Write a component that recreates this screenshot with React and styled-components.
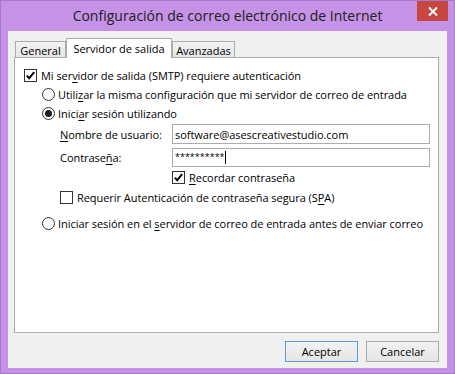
import React from "react";
import styled, { createGlobalStyle } from "styled-components";

const Global = createGlobalStyle`
  html, body { margin: 0; padding: 0; }
  body {
    background: #c592e7;
    font-family: "Open Sans", "Noto Sans", sans-serif;
    color: #000;
  }
`;

const Window = styled.div`
  width: 455px;
  height: 374px;
  box-sizing: border-box;
  border: 1px solid #a878cc;
  background: #c592e7;
  display: flex;
  flex-direction: column;
`;

const TitleBar = styled.div`
  height: 30px;
  display: grid;
  grid-template-columns: 31px 1fr 31px;
  padding: 0 6px;
  align-items: start;
`;

const Title = styled.div`
  grid-column: 2;
  text-align: center;
  font-size: 14px;
  line-height: 30px;
  color: #202020;
  white-space: nowrap;
`;

const CloseBtn = styled.div`
  grid-column: 3;
  height: 20px;
  background: #c7463f;
  display: flex;
  align-items: center;
  justify-content: center;
`;

const Client = styled.div`
  flex: 1;
  margin: 0 7px 5px 7px;
  background: #f0f0f0;
  display: flex;
  flex-direction: column;
  padding: 7px 8px 6px 6px;
`;

const TabStrip = styled.div`
  display: flex;
  align-items: flex-end;
  height: 19px;
  padding-left: 1px;
  position: relative;
  z-index: 1;
`;

const Tab = styled.div`
  box-sizing: border-box;
  width: ${(p) => p.$w}px;
  height: ${(p) => (p.$active ? 20 : 16)}px;
  margin-bottom: ${(p) => (p.$active ? -1 : 0)}px;
  border: 1px solid #acacac;
  border-bottom: none;
  background: ${(p) =>
    p.$active ? "#ffffff" : "linear-gradient(#f2f2f2, #e6e6e6)"};
  font-size: 11px;
  display: flex;
  align-items: center;
  justify-content: center;
  padding-top: ${(p) => (p.$active ? 0 : 1)}px;
  white-space: nowrap;
`;

const Panel = styled.div`
  flex: 1;
  border: 1px solid #acacac;
  background: #fff;
  padding: 8px 0 0 9px;
  display: flex;
  flex-direction: column;
  font-size: 11px;
  letter-spacing: -0.05px;
`;

const Row = styled.div`
  height: ${(p) => p.$h || 19}px;
  margin-left: ${(p) => p.$indent || 0}px;
  margin-top: ${(p) => p.$mt || 0}px;
  display: flex;
  align-items: center;
  gap: ${(p) => (p.$gap != null ? p.$gap : 4)}px;
  white-space: nowrap;
`;

const U = styled.span`
  text-decoration: underline;
  text-underline-offset: 2px;
`;

const Box = styled.span`
  box-sizing: border-box;
  width: 13px;
  height: 13px;
  border: 1px solid #333;
  background: #fff;
  display: inline-flex;
  align-items: center;
  justify-content: center;
  flex: none;
`;

const Radio = styled.span`
  box-sizing: border-box;
  width: 13px;
  height: 13px;
  border-radius: 50%;
  border: 1px solid #333;
  background: #fff;
  display: inline-flex;
  align-items: center;
  justify-content: center;
  flex: none;
  &::after {
    content: "";
    width: 7px;
    height: 7px;
    border-radius: 50%;
    background: ${(p) => (p.$on ? "#1a1a1a" : "transparent")};
  }
`;

const Label = styled.span`
  width: 112px;
  flex: none;
`;

const Field = styled.div`
  box-sizing: border-box;
  width: 258px;
  height: ${(p) => p.$h || 20}px;
  border: 1px solid #abadb3;
  background: #fff;
  padding: 0 2px;
  display: flex;
  align-items: center;
  font-size: 11px;
`;

const Mask = styled.span`
  font-size: 9px;
  letter-spacing: 0;
  position: relative;
  top: -1px;
`;

const Caret = styled.span`
  display: inline-block;
  width: 1px;
  height: 13px;
  background: #000;
  margin-left: 0;
`;

const ButtonRow = styled.div`
  display: flex;
  justify-content: flex-end;
  gap: 8px;
  margin-top: 8px;
`;

const Button = styled.div`
  box-sizing: border-box;
  width: 73px;
  height: 21px;
  border: 1px solid ${(p) => (p.$primary ? "#5b9bd8" : "#acacac")};
  background: linear-gradient(#f2f2f2, #e5e5e5);
  font-size: 11px;
  display: flex;
  align-items: center;
  justify-content: center;
`;

const Check = () => (
  <svg width="11" height="11" viewBox="0 0 11 11">
    <path d="M1.8 5.6 L4.2 8.2 L9.2 2.2" fill="none" stroke="#000" strokeWidth="2" />
  </svg>
);

export default function App() {
  return (
    <>
      <Global />
      <Window>
        <TitleBar>
          <Title>Configuración de correo electrónico de Internet</Title>
          <CloseBtn>
            <svg width="10" height="9" viewBox="0 0 10 9">
              <path d="M1 0.5 L9 8.5 M9 0.5 L1 8.5" stroke="#fff" strokeWidth="2" />
            </svg>
          </CloseBtn>
        </TitleBar>
        <Client>
          <TabStrip>
            <Tab $w={51}>General</Tab>
            <Tab $w={106} $active>Servidor de salida</Tab>
            <Tab $w={63}>Avanzadas</Tab>
          </TabStrip>
          <Panel>
            <Row>
              <Box><Check /></Box>
              <span>Mi ser<U>v</U>idor de salida (SMTP) requiere autenticación</span>
            </Row>
            <Row $indent={18} $gap={3}>
              <Radio />
              <span>Utili<U>z</U>ar la misma configuración que mi servidor de correo de entrada</span>
            </Row>
            <Row $indent={18} $gap={3}>
              <Radio $on />
              <span>Inici<U>a</U>r sesión utilizando</span>
            </Row>
            <Row $indent={36} $mt={1} $h={20} $gap={0}>
              <Label><U>N</U>ombre de usuario:</Label>
              <Field>software@asescreativestudio.com</Field>
            </Row>
            <Row $indent={36} $mt={4} $h={19} $gap={0}>
              <Label>Contrase<U>ñ</U>a:</Label>
              <Field $h={19}><Mask>**********</Mask><Caret /></Field>
            </Row>
            <Row $indent={148} $mt={1}>
              <Box><Check /></Box>
              <span><U>R</U>ecordar contraseña</span>
            </Row>
            <Row $indent={36} $mt={1}>
              <Box />
              <span>Requerir Autenticación de contraseña segura (S<U>P</U>A)</span>
            </Row>
            <Row $indent={18} $mt={7} $gap={3}>
              <Radio />
              <span>Iniciar sesión en el <U>s</U>ervidor de correo de entrada antes de enviar correo</span>
            </Row>
          </Panel>
          <ButtonRow>
            <Button $primary>Aceptar</Button>
            <Button>Cancelar</Button>
          </ButtonRow>
        </Client>
      </Window>
    </>
  );
}
